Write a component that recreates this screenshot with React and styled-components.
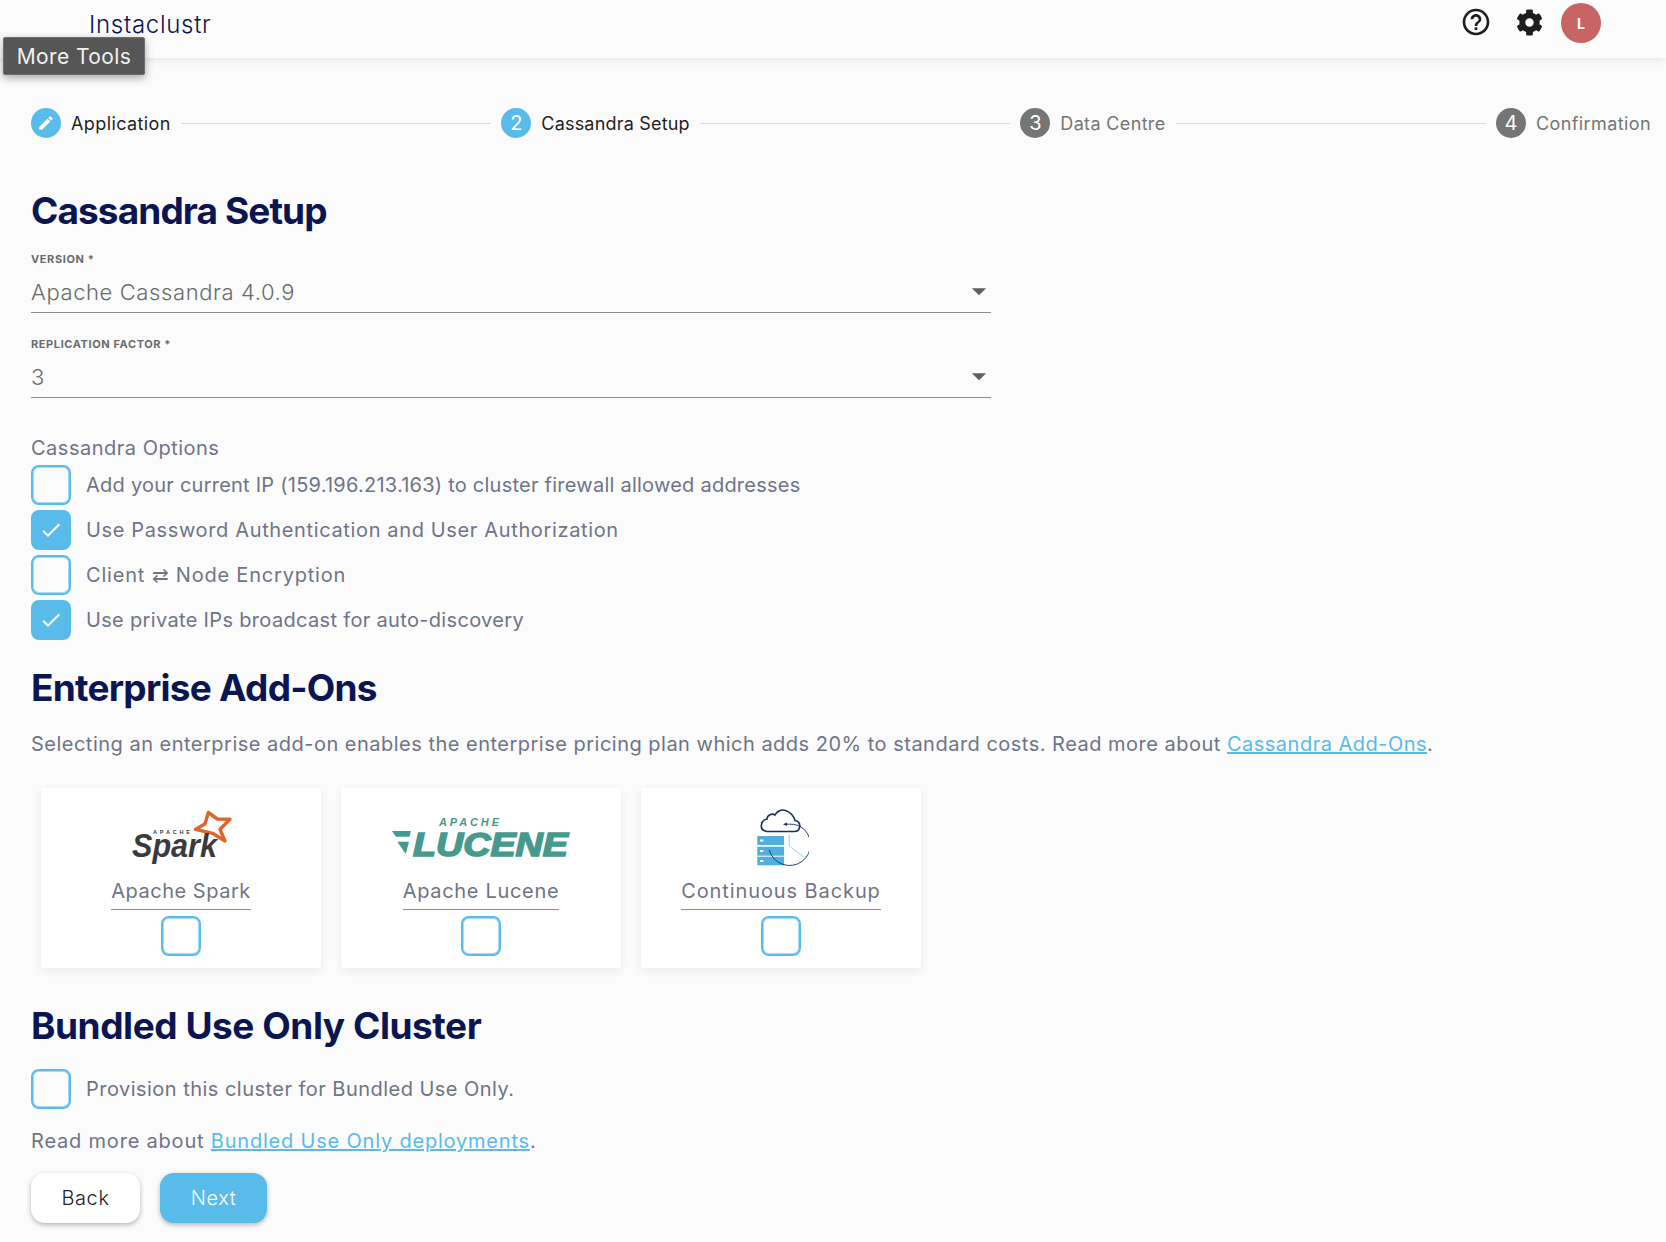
import React from "react";
import styled, { createGlobalStyle } from "styled-components";
import { FaCog } from "react-icons/fa";
import { MdHelpOutline, MdEdit, MdCheck, MdArrowDropDown } from "react-icons/md";

const navy = "#0a1551";
const blue = "#58bbe9";
const grey = "#6f7487";
const font = '"Inter", "Noto Sans", sans-serif';
const logoFont = '"Liberation Sans", sans-serif';

const GlobalStyle = createGlobalStyle`
  html, body {
    margin: 0;
    padding: 0;
    background: #fbfbfb;
    font-family: ${font};
  }
  * { box-sizing: border-box; }
`;

const Page = styled.div`
  position: relative;
  min-height: 1242px;
  overflow: hidden;
`;

const TopBar = styled.header`
  height: 58px;
  padding: 0 64px 0 89px;
  display: flex;
  align-items: center;
  justify-content: space-between;
  background: #fcfcfc;
  box-shadow: 0 2px 8px rgba(0, 0, 0, 0.09);
`;

const Brand = styled.div`
  font-size: 24px;
  font-weight: 300;
  letter-spacing: 0.7px;
  color: ${navy};
  margin-top: -10px;
`;

const TopIcons = styled.div`
  display: flex;
  align-items: center;
  color: #1e1e1e;
  margin-top: -12px;
  margin-right: 1px;
`;

const IconSlot = styled.div`
  display: flex;
  width: ${p => p.$w}px;
  margin-bottom: 2px;
  justify-content: flex-start;
`;

const Avatar = styled.div`
  width: 40px;
  height: 40px;
  border-radius: 50%;
  background: #c96464;
  color: #fff;
  font-size: 14px;
  font-weight: 700;
  display: flex;
  align-items: center;
  justify-content: center;
`;

const Tooltip = styled.div`
  position: absolute;
  left: 3px;
  top: 37px;
  width: 142px;
  height: 38px;
  background: #565656;
  border: 1px solid #6e6e6e;
  border-radius: 2px;
  color: #f2f2f2;
  font-size: 21px;
  letter-spacing: 0.4px;
  line-height: 38px;
  text-align: center;
  box-shadow: 0 3px 8px rgba(0, 0, 0, 0.35);
`;

const Content = styled.main`
  padding: 50px 15px 0 31px;
`;

const Stepper = styled.div`
  display: flex;
  align-items: center;
  height: 30px;
`;

const Step = styled.div`
  display: flex;
  align-items: center;
  gap: 10px;
`;

const StepCircle = styled.div`
  width: 30px;
  height: 30px;
  border-radius: 50%;
  background: ${p => (p.$active ? blue : "#757575")};
  color: #fff;
  font-size: 20px;
  display: flex;
  align-items: center;
  justify-content: center;
`;

const StepLabel = styled.span`
  font-size: 18px;
  letter-spacing: ${p => p.$ls}px;
  color: ${p => (p.$active ? "#1f1f1f" : "#757575")};
`;

const StepLine = styled.div`
  flex: 1;
  height: 1px;
  margin: 0 10px;
  background: #dcdcdc;
`;

const Heading = styled.h1`
  margin: ${p => p.$top}px 0 0;
  font-size: 37px;
  line-height: 44px;
  font-weight: 700;
  letter-spacing: ${p => p.$ls}px;
  color: ${navy};
`;

const Field = styled.div`
  width: 960px;
  height: 61px;
  margin-top: ${p => p.$top}px;
  border-bottom: 1px solid #8e8e8e;
  position: relative;
`;

const FieldLabel = styled.div`
  font-size: 11px;
  line-height: 14px;
  font-weight: 700;
  letter-spacing: 0.6px;
  color: #6b6b6b;
  text-transform: uppercase;
`;

const FieldValue = styled.div`
  margin-top: 11px;
  font-size: 22px;
  line-height: 30px;
  font-weight: 300;
  letter-spacing: 0.6px;
  color: #6a6a6a;
`;

const Caret = styled.span`
  position: absolute;
  right: -5px;
  top: 22px;
  color: #5f5f5f;
  display: flex;
`;

const GroupLabel = styled.div`
  margin-top: 38px;
  font-size: 20px;
  line-height: 24px;
  letter-spacing: 0.5px;
  color: ${grey};
`;

const OptionList = styled.div`
  display: flex;
  flex-direction: column;
  gap: 5px;
  margin-top: 5px;
`;

const Option = styled.label`
  display: flex;
  align-items: center;
  gap: 15px;
  height: 40px;
  margin-top: ${p => p.$top || 0}px;
  font-size: 20px;
  letter-spacing: ${p => p.$ls}px;
  color: ${grey};
`;

const Box = styled.span`
  width: 40px;
  height: 40px;
  flex: none;
  border-radius: 8px;
  border: 2px solid ${blue};
  box-shadow: inset 0 0 0 1px rgba(88, 187, 233, 0.5);
  background: ${p => (p.$checked ? blue : "transparent")};
  color: #fff;
  display: flex;
  align-items: center;
  justify-content: center;
`;

const Paragraph = styled.p`
  margin: ${p => p.$top}px 0 0;
  font-size: 20px;
  line-height: 26px;
  letter-spacing: ${p => p.$ls}px;
  color: ${grey};
`;

const Link = styled.a`
  color: ${blue};
  text-decoration: underline;
`;

const CardRow = styled.div`
  display: flex;
  gap: 20px;
  margin: 31px 0 0 10px;
`;

const Card = styled.div`
  width: 280px;
  height: 180px;
  background: #fff;
  border-radius: 3px;
  box-shadow: 0 3px 10px rgba(0, 0, 0, 0.07);
  display: flex;
  flex-direction: column;
  align-items: center;
  padding-top: 18px;
`;

const CardLogo = styled.div`
  height: 64px;
  display: flex;
  align-items: center;
  justify-content: center;
`;

const CardTitle = styled.div`
  margin-top: 7px;
  padding-bottom: 3px;
  height: 33px;
  font-size: 20px;
  line-height: 28px;
  letter-spacing: ${p => p.$ls}px;
  color: ${grey};
  border-bottom: 1px solid #8c8c8c;
`;

const CardBox = styled.div`
  margin-top: 6px;
`;

const Actions = styled.div`
  display: flex;
  gap: 20px;
  margin-top: 19px;
`;

const Button = styled.button`
  height: 50px;
  width: ${p => p.$w}px;
  border: none;
  border-radius: 14px;
  font-family: ${font};
  font-size: 20px;
  font-weight: 300;
  letter-spacing: 0.6px;
  background: ${p => (p.$primary ? blue : "#fff")};
  color: ${p => (p.$primary ? "#fff" : "#222")};
  box-shadow: 0 2px 5px rgba(0, 0, 0, 0.28);
`;

const SparkLogo = () => (
  <svg width="102" height="56" viewBox="0 0 102 56" overflow="visible">
    <path
      d="M78.3 2.5 L87.3 9 L100 9.3 L90 19.3 L95 31 L82.7 23.3 L65.5 19.3 L75 14 Z"
      fill="#fff"
      stroke="#e0642b"
      strokeWidth="3.4"
      strokeLinejoin="round"
    />
    <text x="23" y="24" fontFamily={logoFont} fontSize="5.5" fontWeight="700" textLength="37" fill="#3a3a3c">APACHE</text>
    <text x="2" y="47" fontFamily={logoFont} fontSize="34" fontWeight="700" fontStyle="italic" textLength="85" lengthAdjust="spacingAndGlyphs" fill="#3a3a3c">Spark</text>
  </svg>
);

const LuceneLogo = () => (
  <svg width="178" height="46" viewBox="0 0 178 46" overflow="visible">
    <text x="47" y="11" fontFamily={logoFont} fontSize="11" fontWeight="700" fontStyle="italic" textLength="60" fill="#459a8d">APACHE</text>
    <path d="M0 16 H19 L17.5 21.7 H4 Z M5.3 26.7 H17 L13.7 39 Z" fill="#459a8d" />
    <text x="21" y="41" fontFamily={logoFont} fontSize="34" fontWeight="700" fontStyle="italic" textLength="155" lengthAdjust="spacingAndGlyphs" stroke="#459a8d" strokeWidth="1.6" fill="#459a8d">LUCENE</text>
  </svg>
);

const BackupLogo = () => (
  <svg width="56" height="60" viewBox="0 0 56 60">
    <rect x="4.3" y="28" width="26.7" height="9" fill="#4fb0df" />
    <rect x="4.3" y="38.7" width="26.7" height="9" fill="#4fb0df" />
    <rect x="4.3" y="48.7" width="26.7" height="8.6" fill="#4fb0df" />
    <rect x="7" y="31.5" width="3.3" height="2" fill="#fff" />
    <rect x="7" y="42" width="3.3" height="2" fill="#fff" />
    <rect x="7" y="52" width="3.3" height="2" fill="#fff" />
    <path d="M14 23.5 H41 C48 23.5 49 14 42 12.5 C40 5 32 0 26 3 C24 4 23 5 22 7 C19 5 14 7 14 11 C8 12 5 22 14 23.5 Z" fill="none" stroke="#16315f" strokeWidth="1.6" />
    <path d="M47.7 18.7 A21 21 0 1 1 16.3 42" fill="none" stroke="#16315f" strokeWidth="0.9" />
    <path d="M47.7 18.7 C43 16 38 16 33 16.3" fill="none" stroke="#16315f" strokeWidth="0.9" />
    <path d="M30 16.3 L34 14.5 V18 Z" fill="#16315f" />
    <path d="M36.3 27 V38 L50.3 48.7" fill="none" stroke="#8fd0ee" strokeWidth="0.9" />
  </svg>
);

const CheckBox = ({ checked }) => (
  <Box $checked={checked}>{checked && <MdCheck size={24} />}</Box>
);

const addOns = [
  { title: "Apache Spark", logo: <SparkLogo />, ls: 0.53 },
  { title: "Apache Lucene", logo: <LuceneLogo />, ls: 0.68 },
  { title: "Continuous Backup", logo: <BackupLogo />, ls: 0.9 },
];

const options = [
  { label: "Add your current IP (159.196.213.163) to cluster firewall allowed addresses", ls: 0.24 },
  { label: "Use Password Authentication and User Authorization", checked: true, ls: 0.64 },
  { label: "Client ⇄ Node Encryption", ls: 0.8 },
  { label: "Use private IPs broadcast for auto-discovery", checked: true, ls: 0.33 },
];

const App = () => (
  <Page>
    <GlobalStyle />
    <TopBar>
      <Brand>Instaclustr</Brand>
      <TopIcons>
        <IconSlot $w={56}><MdHelpOutline size={32} /></IconSlot>
        <IconSlot $w={45}><FaCog size={27} /></IconSlot>
        <Avatar>L</Avatar>
      </TopIcons>
    </TopBar>
    <Tooltip>More Tools</Tooltip>
    <Content>
      <Stepper>
        <Step>
          <StepCircle $active><MdEdit size={18} /></StepCircle>
          <StepLabel $active $ls={0.4}>Application</StepLabel>
        </Step>
        <StepLine />
        <Step>
          <StepCircle $active>2</StepCircle>
          <StepLabel $active $ls={0.2}>Cassandra Setup</StepLabel>
        </Step>
        <StepLine />
        <Step>
          <StepCircle>3</StepCircle>
          <StepLabel $ls={0.35}>Data Centre</StepLabel>
        </Step>
        <StepLine />
        <Step>
          <StepCircle>4</StepCircle>
          <StepLabel $ls={0.4}>Confirmation</StepLabel>
        </Step>
      </Stepper>

      <Heading $top={51} $ls={-0.9}>Cassandra Setup</Heading>
      <Field $top={19}>
        <FieldLabel>Version *</FieldLabel>
        <FieldValue>Apache Cassandra 4.0.9</FieldValue>
        <Caret><MdArrowDropDown size={34} /></Caret>
      </Field>
      <Field $top={24}>
        <FieldLabel>Replication Factor *</FieldLabel>
        <FieldValue>3</FieldValue>
        <Caret><MdArrowDropDown size={34} /></Caret>
      </Field>

      <GroupLabel>Cassandra Options</GroupLabel>
      <OptionList>
        {options.map(o => (
          <Option key={o.label} $ls={o.ls}>
            <CheckBox checked={o.checked} />
            {o.label}
          </Option>
        ))}
      </OptionList>

      <Heading $top={26} $ls={-0.75}>Enterprise Add-Ons</Heading>
      <Paragraph $top={21} $ls={0.49}>
        Selecting an enterprise add-on enables the enterprise pricing plan which adds 20% to standard costs. Read more about <Link>Cassandra Add-Ons</Link>.
      </Paragraph>
      <CardRow>
        {addOns.map(a => (
          <Card key={a.title}>
            <CardLogo>{a.logo}</CardLogo>
            <CardTitle $ls={a.ls}>{a.title}</CardTitle>
            <CardBox><CheckBox /></CardBox>
          </Card>
        ))}
      </CardRow>

      <Heading $top={36} $ls={-0.45}>Bundled Use Only Cluster</Heading>
      <Option $top={21} $ls={0.47}>
        <CheckBox />
        Provision this cluster for Bundled Use Only.
      </Option>
      <Paragraph $top={19} $ls={0.8}>
        Read more about <Link>Bundled Use Only deployments</Link>.
      </Paragraph>
      <Actions>
        <Button $w={109}>Back</Button>
        <Button $w={107} $primary>Next</Button>
      </Actions>
    </Content>
  </Page>
);

export default App;
